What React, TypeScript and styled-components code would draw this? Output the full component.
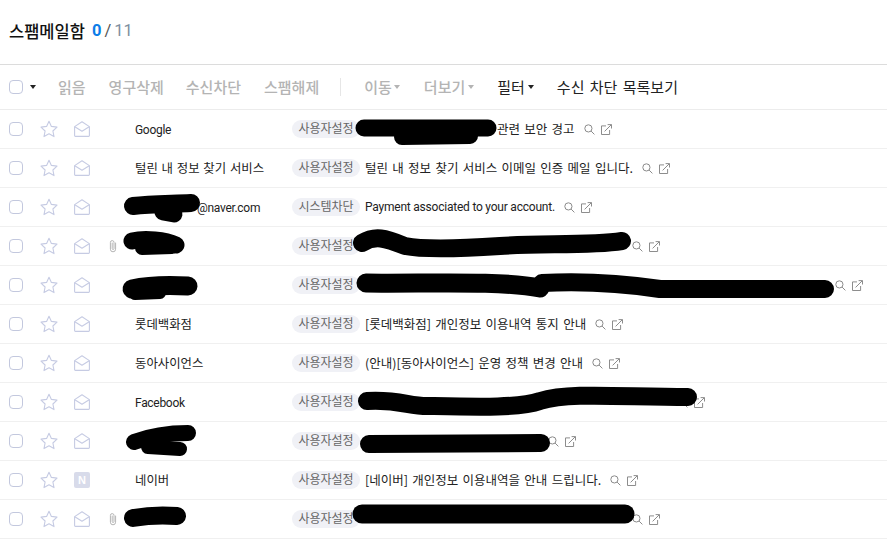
import React from "react";
import styled, { createGlobalStyle } from "styled-components";

const Global = createGlobalStyle`
  html, body { margin: 0; padding: 0; background: #fff; }
  body { font-family: "Noto Sans CJK KR", "Noto Sans", sans-serif; color: #222; }
`;

const Page = styled.div`
  position: relative;
  width: 887px;
  height: 544px;
  overflow: hidden;
  background: #fff;
`;

const Header = styled.header`
  box-sizing: border-box;
  height: 65px;
  padding: 0 0 2px 9px;
  border-bottom: 1px solid #dcdcdc;
  display: flex;
  align-items: center;
`;

const Title = styled.h1`
  margin: 0;
  font-size: 16.5px;
  font-weight: 500;
  line-height: 20px;
  color: #111;
`;

const Count = styled.span<{ $c: string; $ml?: number; $bold?: boolean }>`
  font-family: "Roboto", sans-serif;
  font-size: 16.5px;
  line-height: 20px;
  color: ${(p) => p.$c};
  margin-left: ${(p) => p.$ml ?? 0}px;
  font-weight: ${(p) => (p.$bold ? 700 : 400)};
`;

const Toolbar = styled.div`
  height: 45px;
  box-sizing: border-box;
  border-bottom: 1px solid #ececec;
  display: flex;
  align-items: center;
  padding-left: 9px;
`;

const Check = styled.span`
  width: 14px;
  height: 14px;
  box-sizing: border-box;
  border: 1px solid #c3c8de;
  border-radius: 4px;
  background: #fff;
  flex: none;
`;

const Caret = styled.span<{ $c: string; $ml: number }>`
  width: 0;
  height: 0;
  flex: none;
  margin-left: ${(p) => p.$ml}px;
  border-left: 3.5px solid transparent;
  border-right: 3.5px solid transparent;
  border-top: 4.5px solid ${(p) => p.$c};
`;

const Action = styled.span<{ $dim?: boolean; $ml: number }>`
  font-size: 15px;
  line-height: 20px;
  white-space: nowrap;
  word-spacing: 2px;
  margin-left: ${(p) => p.$ml}px;
  color: ${(p) => (p.$dim ? "#b4b4b4" : "#222")};
  font-weight: ${(p) => (p.$dim ? 500 : 400)};
`;

const Sep = styled.span`
  width: 1px;
  height: 18px;
  background: #e6e6e6;
  margin-left: 21px;
  flex: none;
`;

const List = styled.div``;

const Row = styled.div`
  height: 39px;
  box-sizing: border-box;
  border-bottom: 1px solid #f0f0f0;
  display: flex;
  align-items: center;
  padding-left: 9px;
  color: #222;
`;

const IconCell = styled.span<{ $w: number; $ml: number }>`
  width: ${(p) => p.$w}px;
  margin-left: ${(p) => p.$ml}px;
  flex: none;
  display: flex;
  align-items: center;
  justify-content: center;
`;

const Sender = styled.span<{ $latin?: boolean }>`
  width: 157px;
  flex: none;
  white-space: nowrap;
  font-family: ${(p) => (p.$latin ? '"Roboto", sans-serif' : "inherit")};
  font-size: ${(p) => (p.$latin ? 12 : 12.4)}px;
  letter-spacing: ${(p) => (p.$latin ? -0.3 : 0)}px;
  word-spacing: ${(p) => (p.$latin ? 0 : 1)}px;
  padding-top: ${(p) => (p.$latin ? 2 : 0)}px;
  padding-bottom: ${(p) => (p.$latin ? 0 : 1)}px;
  display: flex;
  align-items: center;
`;

const Tag = styled.span`
  width: 68px;
  height: 18px;
  flex: none;
  border-radius: 9px;
  background: #f0f1f6;
  color: #666;
  font-size: 12px;
  line-height: 16px;
  text-align: center;
  white-space: nowrap;
`;

const Subject = styled.span<{ $latin?: boolean }>`
  margin-left: 5px;
  white-space: nowrap;
  font-family: ${(p) => (p.$latin ? '"Roboto", sans-serif' : "inherit")};
  font-size: ${(p) => (p.$latin ? 12 : 12.5)}px;
  letter-spacing: ${(p) => (p.$latin ? -0.22 : 0)}px;
  word-spacing: ${(p) => (p.$latin ? 0 : 1.5)}px;
  padding-bottom: ${(p) => (p.$latin ? 0 : 2)}px;
  display: flex;
  align-items: center;
`;

const Masked = styled.span<{ $w: number }>`
  display: inline-block;
  width: ${(p) => p.$w}px;
  flex: none;
`;

const RowTool = styled.span<{ $ml: number }>`
  display: flex;
  margin-left: ${(p) => p.$ml}px;
  flex: none;
`;

const NBadge = styled.span`
  width: 16px;
  height: 16px;
  border-radius: 2px;
  background: #d8dbea;
  color: #fff;
  font-family: "Liberation Sans", sans-serif;
  font-size: 11px;
  font-weight: 700;
  line-height: 16px;
  text-align: center;
`;

const Scribbles = styled.svg`
  position: absolute;
  left: 0;
  top: 0;
  width: 887px;
  height: 544px;
  pointer-events: none;
`;

const Star = () => (
  <svg width="18" height="18" viewBox="0 0 18 18" fill="none" stroke="#c6cbe3" strokeWidth="1.1" strokeLinejoin="round">
    <path d="M9 1.2l2.4 5.2 5.6.7-4.1 3.9 1.1 5.6L9 13.8l-5 2.8 1.1-5.6L1 7.1l5.6-.7z" />
  </svg>
);

const MailOpen = () => (
  <svg width="16" height="16" viewBox="0 0 16 16" fill="none" stroke="#c6cbe3" strokeWidth="1.1" strokeLinejoin="round">
    <path d="M.6 5.6L8 .8l7.4 4.8v9a.8.8 0 0 1-.8.8H1.4a.8.8 0 0 1-.8-.8z" />
    <path d="M.8 5.8L8 10.2l7.2-4.4" />
  </svg>
);

const Clip = () => (
  <svg width="10" height="14" viewBox="0 0 10 14" fill="none" stroke="#b5b5b5" strokeWidth="1" strokeLinecap="round">
    <path d="M7.6 4v6.2a2.6 2.6 0 0 1-5.2 0V3.4a1.8 1.8 0 0 1 3.6 0v6.2a.9.9 0 0 1-1.8 0V4" />
  </svg>
);

const Search = () => (
  <svg width="11" height="11" viewBox="0 0 11 11" fill="none" stroke="#8a8a8a" strokeWidth="1">
    <circle cx="4.4" cy="4.4" r="3.6" />
    <path d="M7.1 7.1L10.4 10.4" />
  </svg>
);

const External = () => (
  <svg width="11" height="11" viewBox="0 0 11 11" fill="none" stroke="#808080" strokeWidth="0.9">
    <path d="M5 1.9H.5v8.6h8.1V6" />
    <path d="M3.6 7.4L10.2.8M6.6.6h3.9v3.9" />
  </svg>
);

type Mail = {
  sender?: string;
  senderLatin?: boolean;
  maskedSender?: number;
  tag: string;
  clip?: boolean;
  naver?: boolean;
  masked?: number;
  subject?: string;
  subjectLatin?: boolean;
};

const mails: Mail[] = [
  { sender: "Google", senderLatin: true, tag: "사용자설정", masked: 132, subject: "관련 보안 경고" },
  { sender: "털린 내 정보 찾기 서비스", tag: "사용자설정", subject: "털린 내 정보 찾기 서비스 이메일 인증 메일 입니다." },
  { maskedSender: 62, sender: "@naver.com", senderLatin: true, tag: "시스템차단", subject: "Payment associated to your account.", subjectLatin: true },
  { clip: true, tag: "사용자설정", masked: 258 },
  { tag: "사용자설정", masked: 461 },
  { sender: "롯데백화점", tag: "사용자설정", subject: "[롯데백화점] 개인정보 이용내역 통지 안내" },
  { sender: "동아사이언스", tag: "사용자설정", subject: "(안내)[동아사이언스] 운영 정책 변경 안내" },
  { sender: "Facebook", senderLatin: true, tag: "사용자설정", masked: 303 },
  { tag: "사용자설정", masked: 174 },
  { sender: "네이버", naver: true, tag: "사용자설정", subject: "[네이버] 개인정보 이용내역을 안내 드립니다." },
  { clip: true, tag: "사용자설정", masked: 258 },
];

const strokes: { d: string; w: number }[] = [
  { d: "M364 128L488 128", w: 17 },
  { d: "M402 137L470 136", w: 16 },
  { d: "M133 206C150 204 170 204 191 203", w: 18 },
  { d: "M163 212L174 214", w: 17 },
  { d: "M132 241C145 238 165 240 176 245", w: 17 },
  { d: "M142 248L172 247", w: 14 },
  { d: "M132 289C150 285 170 285 188 286", w: 19 },
  { d: "M135 294L160 293", w: 12 },
  { d: "M134 442C150 436 170 433 188 433", w: 16 },
  { d: "M148 447L180 449", w: 14 },
  { d: "M133 518C150 515 165 515 177 516", w: 18 },
  { d: "M362 243C375 235 385 238 405 246C425 250 470 248 500 246C540 243 590 246 622 241", w: 18 },
  { d: "M366 283C420 284 500 280 540 288", w: 19 },
  { d: "M542 283C600 280 640 286 660 289L825 289", w: 18 },
  { d: "M367 401C400 399 410 407 430 406C480 407 520 408 540 401C570 392 620 397 688 397", w: 18 },
  { d: "M369 444L541 443", w: 18 },
  { d: "M362 514L625 514", w: 19 },
];

export default function App() {
  return (
    <Page>
      <Global />
      <Header>
        <Title>스팸메일함</Title>
        <Count $c="#0b7de8" $ml={7} $bold>0</Count>
        <Count $c="#555" $ml={3}>/</Count>
        <Count $c="#7d8ea0" $ml={3}>11</Count>
      </Header>
      <Toolbar>
        <Check />
        <Caret $c="#222" $ml={7} />
        <Action $dim $ml={22}>읽음</Action>
        <Action $dim $ml={23}>영구삭제</Action>
        <Action $dim $ml={22}>수신차단</Action>
        <Action $dim $ml={23}>스팸해제</Action>
        <Sep />
        <Action $dim $ml={23}>이동</Action>
        <Caret $c="#b4b4b4" $ml={2} />
        <Action $dim $ml={24}>더보기</Action>
        <Caret $c="#b4b4b4" $ml={3} />
        <Action $ml={23}>필터</Action>
        <Caret $c="#222" $ml={3} />
        <Action $ml={23}>수신 차단 목록보기</Action>
      </Toolbar>
      <List>
        {mails.map((m, i) => (
          <Row key={i}>
            <Check />
            <IconCell $w={18} $ml={17}><Star /></IconCell>
            <IconCell $w={16} $ml={16}>{m.naver ? <NBadge>N</NBadge> : <MailOpen />}</IconCell>
            <IconCell $w={10} $ml={18}>{m.clip && <Clip />}</IconCell>
            <IconCell $w={17} $ml={0} />
            <Sender $latin={m.senderLatin}>
              {m.maskedSender ? <Masked $w={m.maskedSender} /> : null}
              {m.sender}
            </Sender>
            <Tag>{m.tag}</Tag>
            <Subject $latin={m.subjectLatin}>
              {m.masked ? <Masked $w={m.masked} /> : null}
              {m.subject}
            </Subject>
            <RowTool $ml={9}><Search /></RowTool>
            <RowTool $ml={6}><External /></RowTool>
          </Row>
        ))}
      </List>
      <Scribbles viewBox="0 0 887 544" fill="none" stroke="#000" strokeLinecap="round" strokeLinejoin="round">
        {strokes.map((s, i) => (
          <path key={i} d={s.d} strokeWidth={s.w} />
        ))}
      </Scribbles>
    </Page>
  );
}
